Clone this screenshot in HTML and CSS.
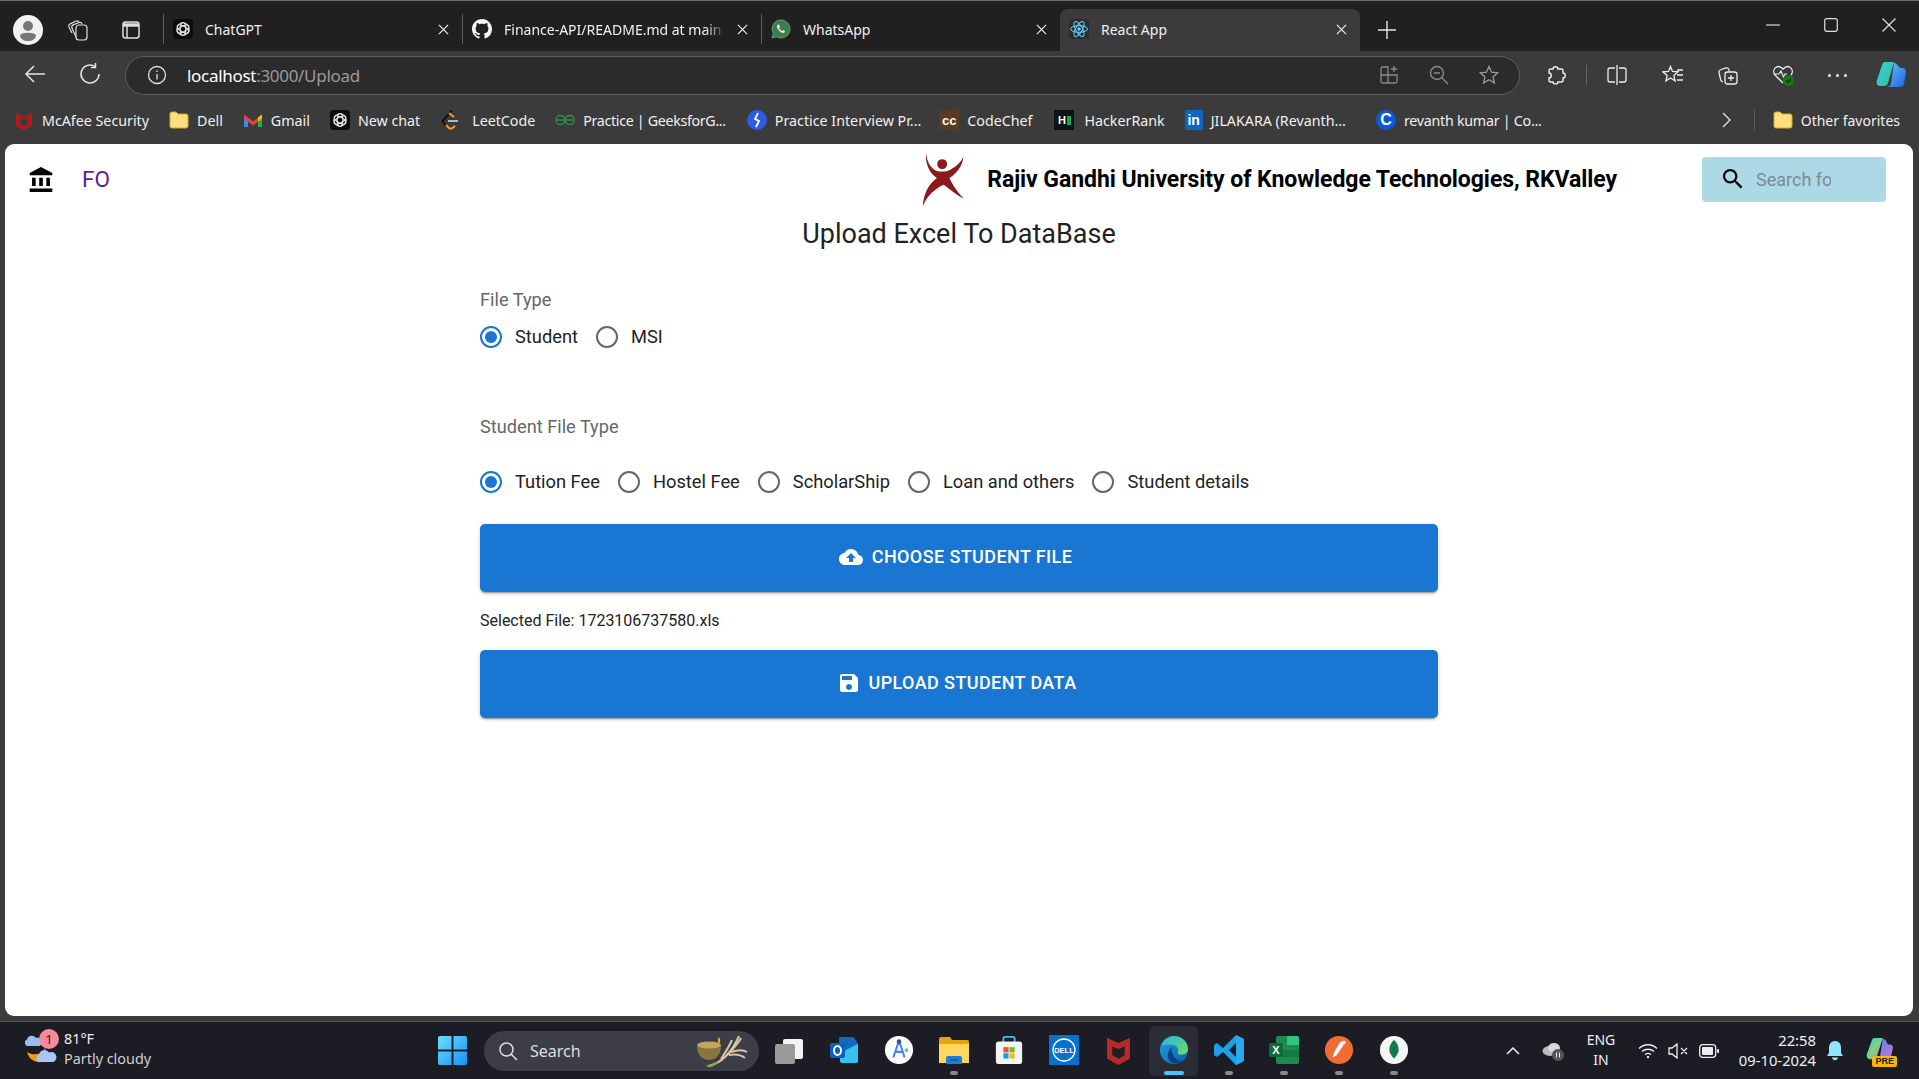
FILE: index.html
```html
<!DOCTYPE html>
<html lang="en">
<head>
    <meta charset="UTF-8">
    <title>React App</title>
    <link rel="stylesheet" href="styles.css">
</head>
<body>
    <svg class="defs" width="0" height="0">
        <symbol id="i-close" viewBox="0 0 12 12"><path d="M1 1l10 10M11 1L1 11" stroke="currentColor" stroke-width="1.3" fill="none"/></symbol>
        <symbol id="i-openai" viewBox="0 0 20 20"><rect width="20" height="20" rx="4" fill="#0c0c0c"/><g fill="none" stroke="#e6e6e6" stroke-width="1.1"><circle cx="10" cy="10" r="6.2"/><ellipse cx="10" cy="10" rx="6.5" ry="2.8" transform="rotate(30 10 10)"/><ellipse cx="10" cy="10" rx="6.5" ry="2.8" transform="rotate(90 10 10)"/><ellipse cx="10" cy="10" rx="6.5" ry="2.8" transform="rotate(150 10 10)"/></g></symbol>
        <symbol id="i-folder" viewBox="0 0 20 18"><path d="M1 3a2 2 0 012-2h4l2 2h8a2 2 0 012 2v10a2 2 0 01-2 2H3a2 2 0 01-2-2z" fill="#ffdf80" stroke="#d9a730"/></symbol>
    </svg>

    <!-- browser: tabs -->
    <div class="tabstrip">
        <div class="strip-left">
            <span class="avatar"><svg viewBox="0 0 30 30" width="30" height="30"><circle cx="15" cy="15" r="15" fill="#f2f2f2"/><circle cx="15" cy="11" r="5" fill="#777"/><path d="M7 20c2-3 14-3 16 0 0 4-4 6-8 6s-8-2-8-6z" fill="#777"/></svg></span>
            <svg class="strip-ico" viewBox="0 0 22 22" width="22" height="22" fill="none" stroke="#ddd" stroke-width="1.2"><rect x="9" y="6" width="11" height="15" rx="3"/><path d="M9 18L5 9c-.6-1.400-.2-2.500 1.200-3.100L12 3.500c1.400-.5 2.500 0 3 1.500"/><path d="M5 14L2 8c-.6-1.400-.2-2.500 1.200-3.100L9 2c1.300-.5 2.300-.2 3 1"/></svg>
            <svg class="strip-ico" viewBox="0 0 20 20" width="20" height="20" fill="none" stroke="#ddd" stroke-width="1.5"><rect x="2" y="2" width="16" height="16" rx="2.500"/><path d="M2 5h16" stroke-width="3.500"/><path d="M6 6v12"/></svg>
        </div>
        <div class="tab">
            <svg class="fav" width="20" height="20"><use href="#i-openai"/></svg>
            <span class="tab-title">ChatGPT</span>
            <svg class="tab-x" width="11" height="11"><use href="#i-close"/></svg>
        </div>
        <div class="tab">
            <svg class="fav" viewBox="0 0 16 16" width="20" height="20"><path fill="#f5f5f5" d="M8 0C3.58 0 0 3.58 0 8c0 3.54 2.29 6.53 5.47 7.59.4.07.55-.17.55-.38 0-.19-.01-.82-.01-1.49-2.010.37-2.530-.49-2.690-.94-.09-.23-.48-.94-.82-1.130-.28-.15-.68-.52-.01-.53.63-.01 1.080.58 1.230.82.72 1.210 1.870.87 2.330.66.07-.52.28-.87.51-1.070-1.780-.2-3.640-.89-3.640-3.950 0-.87.31-1.590.82-2.150-.08-.2-.36-1.020.08-2.120 0 0 .67-.21 2.200.82.64-.18 1.320-.27 2-.27s1.360.09 2 .27c1.530-1.040 2.200-.82 2.200-.82.44 1.100.16 1.920.08 2.120.51.56.82 1.270.82 2.150 0 3.070-1.870 3.750-3.650 3.950.29.25.54.73.54 1.480 0 1.070-.01 1.930-.01 2.200 0 .21.15.46.55.38A8.013 8.013 0 0016 8c0-4.420-3.580-8-8-8z"/></svg>
            <span class="tab-title fade">Finance-API/README.md at main</span>
            <svg class="tab-x" width="11" height="11"><use href="#i-close"/></svg>
        </div>
        <div class="tab">
            <svg class="fav" viewBox="0 0 20 20" width="20" height="20"><path d="M10 1a9 9 0 00-7.700 13.600L1 19l4.500-1.200A9 9 0 1010 1z" fill="#3a7d4e" stroke="#6a9a78"/><path d="M7 5.500c-1.500 1-1.500 3 .5 5.500s4.500 3.500 6 2.500l.5-1.500-2-1-1 1c-1-.5-2.500-2-3-3l1-1-1-2.500z" fill="#e8e8e8"/></svg>
            <span class="tab-title">WhatsApp</span>
            <svg class="tab-x" width="11" height="11"><use href="#i-close"/></svg>
        </div>
        <div class="tab tab-active">
            <svg class="fav" viewBox="0 0 20 20" width="20" height="20"><rect width="20" height="20" rx="3" fill="#2a2c30"/><g fill="none" stroke="#61dafb" stroke-width="1"><ellipse cx="10" cy="10" rx="8.500" ry="3.300"/><ellipse cx="10" cy="10" rx="8.500" ry="3.300" transform="rotate(60 10 10)"/><ellipse cx="10" cy="10" rx="8.500" ry="3.300" transform="rotate(120 10 10)"/></g><circle cx="10" cy="10" r="1.700" fill="#61dafb"/></svg>
            <span class="tab-title">React App</span>
            <svg class="tab-x" width="11" height="11"><use href="#i-close"/></svg>
        </div>
        <svg class="new-tab" viewBox="0 0 18 18" width="18" height="18"><path d="M9 0v18M0 9h18" stroke="#e6e6e6" stroke-width="1.400"/></svg>
        <div class="win-ctrls">
            <svg viewBox="0 0 14 14" width="14" height="14"><path d="M0 7h14" stroke="#ddd" stroke-width="1.200"/></svg>
            <svg viewBox="0 0 14 14" width="14" height="14"><rect x=".7" y=".7" width="12.600" height="12.600" rx="2" fill="none" stroke="#ddd" stroke-width="1.200"/></svg>
            <svg viewBox="0 0 14 14" width="14" height="14"><path d="M.5.5l13 13M13.500.5l-13 13" stroke="#ddd" stroke-width="1.200"/></svg>
        </div>
    </div>

    <!-- browser: address bar -->
    <div class="toolbar">
        <svg class="nav-ico" viewBox="0 0 22 22" width="22" height="22" fill="none" stroke="#e6e6e6" stroke-width="1.500"><path d="M21 11H2M10 3l-8 8 8 8"/></svg>
        <svg class="nav-ico nav-reload" viewBox="0 0 22 22" width="22" height="22" fill="none" stroke="#e6e6e6" stroke-width="1.500"><path d="M16 3.500A9 9 0 1020 11"/><path d="M16.500 0v4.500H12"/></svg>
        <div class="addr">
            <svg viewBox="0 0 20 20" width="20" height="20" fill="none" stroke="#e0e0e0" stroke-width="1.300"><circle cx="10" cy="10" r="8.500"/><path d="M10 9v5.500M10 5.500v1.500"/></svg>
            <span class="addr-url">localhost<span class="addr-dim">:3000/Upload</span></span>
            <div class="addr-tools">
                <svg viewBox="0 0 20 20" width="20" height="20" fill="none" stroke="#8a8a8a" stroke-width="1.300"><path d="M9 2H3.500A1.500 1.500 0 002 3.500V10h7zM2 10v6.500A1.500 1.500 0 003.500 18H9v-8zM9 10h9v6.500a1.500 1.500 0 01-1.500 1.500H9zM15 1v6M12 4h6"/></svg>
                <svg viewBox="0 0 20 20" width="20" height="20" fill="none" stroke="#8a8a8a" stroke-width="1.400"><circle cx="8" cy="8" r="6.500"/><path d="M5 8h6M13 13l6 6"/></svg>
                <svg viewBox="0 0 20 20" width="20" height="20" fill="none" stroke="#9a9a9a" stroke-width="1.300"><path d="M10 1.500l2.500 5.700 6.200.6-4.700 4.100 1.400 6.100-5.400-3.200-5.400 3.200 1.400-6.100L1.300 7.800l6.200-.6z"/></svg>
            </div>
        </div>
        <div class="tool-icons">
            <svg viewBox="0 0 20 20" width="20" height="20" fill="none" stroke="#eee" stroke-width="1.400"><path d="M7 4c0-3 5-3 5 0h3.500A1.500 1.500 0 0117 5.500V8c3 0 3 5 0 5v2.500a1.500 1.500 0 01-1.500 1.500H12c0 2.500-5 2.500-5 0H4.500A1.500 1.500 0 013 15.500V13c3 0 3-5 0-5V5.500A1.500 1.500 0 014.500 4z"/></svg>
            <span class="tool-sep"></span>
            <svg viewBox="0 0 20 20" width="20" height="20" fill="none" stroke="#eee" stroke-width="1.300"><path d="M10 0v20M8 3H3a2 2 0 00-2 2v10a2 2 0 002 2h5M12 3h5a2 2 0 012 2v10a2 2 0 01-2 2h-5"/></svg>
            <svg viewBox="0 0 22 20" width="22" height="20" fill="none" stroke="#eee" stroke-width="1.300"><path d="M8.500 1.500l2 5 5.500.4-4.200 3.600 1.300 5.400-4.600-2.900-4.600 2.900 1.300-5.400L1 6.900l5.500-.4z"/><path d="M15 5h6M15 10h6M15 15h6"/></svg>
            <svg class="coll" viewBox="0 0 20 20" width="20" height="20" fill="none" stroke="#eee" stroke-width="1.300"><rect x="7" y="7" width="12" height="12" rx="2.500"/><path d="M13 10v6M10 13h6M5 17c-1-.3-2-1-2.300-2L1 7.500C.7 6 1.500 5 3 4.500L8 3c1.500-.4 2.700.4 3 2l.2 1"/></svg>
            <svg class="heart" viewBox="0 0 22 22" width="22" height="22"><path d="M11 19L3 11C-1 6 5-1 11 5c6-6 12 1 8 6" fill="none" stroke="#eee" stroke-width="1.300"/><path d="M2 10h5l2-3 2.500 6 1.500-3h2" fill="none" stroke="#eee" stroke-width="1.100"/><circle cx="16.500" cy="16.500" r="5.500" fill="#107c10"/><path d="M14 16.500l2 2 3-3.500" fill="none" stroke="#222" stroke-width="1.200"/></svg>
            <span class="dots"><i></i><i></i><i></i></span>
            <svg class="copilot" viewBox="0 0 30 30" width="30" height="30"><defs><linearGradient id="cpa" x1="0" y1="0" x2="1" y2="1"><stop offset="0" stop-color="#3dc9e8"/><stop offset="1" stop-color="#30c48c"/></linearGradient><linearGradient id="cpb" x1="0" y1="0" x2="1" y2="1"><stop offset="0" stop-color="#6cc4f5"/><stop offset="1" stop-color="#1b60e0"/></linearGradient></defs><path d="M9 2h9l-6 21c-.5 2-2 3-4 3H4C1 26 0 23 1 20L6 5c.5-2 1.500-3 3-3z" fill="url(#cpa)"/><path d="M18 3c2 0 3 1 4 3l2.500 2H27c2 0 3 2 3 4l-2 12c-.5 2-2 3-4 3H11c2 0 3-1 4-3z" fill="url(#cpb)"/></svg>
        </div>
    </div>

    <!-- browser: favorites -->
    <div class="bookmarks">
        <a class="bm bm-mcafee"><svg viewBox="0 0 18 20" width="18" height="20"><path d="M1 3l8 4 8-4v13l-8 4-8-4z" fill="#b01c1c"/><path d="M5 8l4 2 4-2v6l-4 2-4-2z" fill="#3b3b3b"/></svg>McAfee Security</a>
        <a class="bm bm-dell"><svg width="20" height="18"><use href="#i-folder"/></svg>Dell</a>
        <a class="bm bm-gmail"><svg viewBox="0 0 20 16" width="20" height="16"><path d="M1 15V3l4 3v9z" fill="#4285f4"/><path d="M19 15V3l-4 3v9z" fill="#34a853"/><path d="M1 2.500l9 7 9-7v4l-9 7-9-7z" fill="#ea4335"/><path d="M15 5.600l4-3.100v4l-4 3.100z" fill="#fbbc04"/></svg>Gmail</a>
        <a class="bm bm-chat"><svg width="20" height="20"><use href="#i-openai"/></svg>New chat</a>
        <a class="bm bm-leet"><svg viewBox="0 0 18 20" width="18" height="20" fill="none" stroke-width="2"><path d="M11 0.500L1.500 11 5 16" stroke="#111"/><path d="M5 15l3.500 3.500c2 .8 4-1 5.500-2.500" stroke="#f0a21b"/><path d="M8 3l5 4" stroke="#f0a21b"/><path d="M7 11h10" stroke="#b5b5b5"/></svg>LeetCode</a>
        <a class="bm bm-gfg"><svg viewBox="0 0 20 12" width="20" height="12" fill="none" stroke="#2f8d46" stroke-width="1.300"><path d="M10 6h9M10 6H1M1 6c0-6 8-6 9 0 1 6 9 6 9 0M1 6c0 6 8 6 9 0 1-6 9-6 9 0"/></svg>Practice | GeeksforG...</a>
        <a class="bm bm-pip"><svg viewBox="0 0 20 20" width="20" height="20"><circle cx="10" cy="10" r="10" fill="#2c5be8"/><path d="M11 3l-3 6 4 2-3 6" fill="none" stroke="#fff" stroke-width="1.800"/></svg>Practice Interview Pr...</a>
        <a class="bm bm-cc"><span class="fav-box fav-cc">cc</span>CodeChef</a>
        <a class="bm bm-hr"><span class="fav-box fav-hr">H<i></i></span>HackerRank</a>
        <a class="bm bm-in"><span class="fav-box fav-in">in</span>JILAKARA (Revanth...</a>
        <a class="bm bm-rk"><span class="fav-box fav-c">C</span>revanth kumar | Co...</a>
        <svg class="bm-more" viewBox="0 0 10 16" width="10" height="16" fill="none" stroke="#e6e6e6" stroke-width="1.300"><path d="M1 1l7 7-7 7"/></svg>
        <span class="bm-sep"></span>
        <a class="bm bm-other"><svg width="20" height="18"><use href="#i-folder"/></svg>Other favorites</a>
    </div>

    <!-- the app -->
    <div class="page">
        <header class="app-bar">
            <svg class="bank" viewBox="2 1 19 21" width="24" height="25"><path d="M4 10v7h3v-7H4zm6 0v7h3v-7h-3zM2 22h19v-3H2v3zm14-12v7h3v-7h-3zm-4.500-9L2 6v2h19V6l-9.500-5z"/></svg>
            <span class="app-name">FO</span>
            <div class="brand">
                <svg viewBox="35 20 130 165" width="43" height="55" fill="#8a1a1e"><circle cx="96" cy="56" r="15"/><path d="M47 22C50 50 62 70 78 76c12 4 30 4 44-4 18-10 33-24 38-39 0 25-20 52-42 65 10 22 27 47 44 62-22-10-44-30-62-42-25 12-50 32-62 65 0-33 17-68 42-85C58 85 44 55 47 22z"/></svg>
                <span class="brand-name">Rajiv Gandhi University of Knowledge Technologies, RKValley</span>
            </div>
            <div class="search">
                <svg viewBox="3 3 18 18" width="20" height="20"><path d="M15.500 14h-.79l-.28-.27C15.410 12.590 16 11.110 16 9.500 16 5.910 13.090 3 9.500 3S3 5.910 3 9.500 5.910 16 9.500 16c1.610 0 3.090-.59 4.230-1.570l.27.28v.79l5 4.990L20.490 19l-4.990-5zm-6 0C7.010 14 5 11.990 5 9.500S7.010 5 9.500 5 14 7.010 14 9.500 11.990 14 9.500 14z"/></svg>
                <span class="search-text">Search for</span>
            </div>
        </header>

        <main class="upload">
            <h1 class="upload-title">Upload Excel To DataBase</h1>

            <div class="field-label">File Type</div>
            <div class="radio-row">
                <label class="radio-opt"><span class="radio on"></span>Student</label>
                <label class="radio-opt"><span class="radio"></span>MSI</label>
            </div>

            <div class="field-label label-second">Student File Type</div>
            <div class="radio-row row-second">
                <label class="radio-opt"><span class="radio on"></span>Tution Fee</label>
                <label class="radio-opt"><span class="radio"></span>Hostel Fee</label>
                <label class="radio-opt"><span class="radio"></span>ScholarShip</label>
                <label class="radio-opt"><span class="radio"></span>Loan and others</label>
                <label class="radio-opt"><span class="radio"></span>Student details</label>
            </div>

            <button class="btn btn-choose">
                <svg viewBox="0 0 24 24" width="24" height="24"><path d="M19.350 10.040C18.670 6.590 15.640 4 12 4 9.110 4 6.600 5.640 5.350 8.040 2.340 8.360 0 10.910 0 14c0 3.310 2.690 6 6 6h13c2.760 0 5-2.240 5-5 0-2.640-2.050-4.780-4.650-4.960zM14 13v4h-4v-4H7l5-5 5 5h-3z"/></svg>
                Choose Student File
            </button>
            <p class="selected">Selected File: 1723106737580.xls</p>
            <button class="btn btn-upload">
                <svg viewBox="3 3 18 18" width="18" height="18"><path d="M17 3H5c-1.110 0-2 .9-2 2v14c0 1.100.89 2 2 2h14c1.100 0 2-.9 2-2V7l-4-4zm-5 16c-1.660 0-3-1.340-3-3s1.340-3 3-3 3 1.340 3 3-1.340 3-3 3zm3-10H5V5h10v4z"/></svg>
                Upload Student Data
            </button>
        </main>
    </div>

    <!-- windows taskbar -->
    <footer class="taskbar">
        <div class="weather">
            <svg viewBox="0 0 34 36" width="34" height="36"><path d="M2 19c3 11 14 12 20 8l-2-13c0 6-10 10-18 5z" fill="#f09a1e"/><path d="M2 13a3.500 3.500 0 010-6.500 5 5 0 019-1.500 4 4 0 013.500 8z" fill="#9bbcf0"/><path d="M14 29a4 4 0 010-7.500 5.500 5.500 0 0110-2 4.500 4.500 0 014.500 9.500z" fill="#a8c6f5"/></svg>
            <span class="weather-badge">1</span>
            <div class="weather-text"><span>81°F</span><span class="dim">Partly cloudy</span></div>
        </div>
        <svg class="win-logo" viewBox="0 0 30 30" width="30" height="30"><defs><linearGradient id="wl" x1="0" y1="0" x2="1" y2="1"><stop offset="0" stop-color="#6fdcff"/><stop offset="1" stop-color="#1293f5"/></linearGradient></defs><path d="M0 2a2 2 0 012-2h12v14H0zM16 0h12a2 2 0 012 2v12H16zM0 16h14v14H2a2 2 0 01-2-2zM16 16h14v12a2 2 0 01-2 2H16z" fill="url(#wl)"/></svg>
        <div class="tb-search">
            <svg viewBox="0 0 20 20" width="20" height="20" fill="none" stroke="#ddd" stroke-width="1.500"><circle cx="8.500" cy="8.500" r="6.500"/><path d="M13 13l6 6"/></svg>
            <span>Search</span>
            <svg class="diya" viewBox="0 0 56 32" width="56" height="32"><path d="M2 10c6 4 18 4 24 0 0 10-5 15-12 15S2 20 2 10z" fill="#8a7440"/><ellipse cx="14" cy="10" rx="12" ry="3.500" fill="#c0a660"/><path d="M24 2c2 3 1 6 0 7-1-1-2-4 0-7z" fill="#f5a623"/><g fill="none" stroke="#d8c6a4" stroke-width="2"><path d="M14 31c12-3 22-12 30-30"/><path d="M26 24c4-6 8-12 11-19"/><path d="M32 20c5-5 11-11 14-17"/><path d="M34 20c6-1 12 0 16 3"/><path d="M36 17c6-2 11-3 16 0"/></g><path d="M12 31c4 0 8-2 11-4" stroke="#8aa83c" stroke-width="2" fill="none"/></svg>
        </div>
        <div class="tb-apps">
            <span class="app"><svg viewBox="0 0 30 30" width="30" height="30"><rect x="9" y="4" width="20" height="20" rx="2" fill="#f4f4f4"/><rect x="1" y="9" width="20" height="20" rx="2" fill="#9a9a9a"/></svg></span>
            <span class="app"><svg viewBox="0 0 30 30" width="30" height="30"><path d="M10 2h14l5 7v17a2 2 0 01-2 2H13a2 2 0 01-2-2z" fill="#35c2ee"/><path d="M10 2h14l5 7-16 8-3-2z" fill="#0f6cbd"/><rect x="1" y="8" width="15" height="15" rx="2" fill="#0a5fc4"/><ellipse cx="8.500" cy="15.500" rx="3.500" ry="4.500" fill="none" stroke="#fff" stroke-width="2"/></svg></span>
            <span class="app"><svg viewBox="0 0 30 32" width="30" height="30"><circle cx="15" cy="16" r="15" fill="#fff"/><path d="M15 6l-6 18M15 6l6 18M10.500 18h9" fill="none" stroke="#4285f4" stroke-width="2.200"/><circle cx="15" cy="7" r="2.500" fill="#3c4d8f"/><circle cx="23" cy="16" r="2" fill="#3ddc84"/></svg></span>
            <span class="app dot"><svg viewBox="0 0 30 30" width="30" height="30"><path d="M0 4a2 2 0 012-2h9l2 3h15a2 2 0 012 2v21H0z" fill="#e5a50a"/><path d="M0 9h30v19H0z" fill="#ffd75e"/><path d="M7 29v-6a2 2 0 012-2h12a2 2 0 012 2v6z" fill="#1f7fd4"/><path d="M11 25h8" stroke="#0d4f96" stroke-width="1.200"/></svg></span>
            <span class="app"><svg viewBox="0 0 30 32" width="30" height="30"><path d="M9 8V4a2 2 0 012-2h8a2 2 0 012 2v4" fill="none" stroke="#3ec1e6" stroke-width="2"/><rect x="1" y="7" width="28" height="24" rx="3" fill="#f4f4f4"/><rect x="9" y="13" width="5.500" height="5.500" fill="#f25022"/><rect x="15.500" y="13" width="5.500" height="5.500" fill="#7fba00"/><rect x="9" y="19.500" width="5.500" height="5.500" fill="#00a4ef"/><rect x="15.500" y="19.500" width="5.500" height="5.500" fill="#ffb900"/></svg></span>
            <span class="app"><svg viewBox="0 0 30 30" width="30" height="30"><rect width="30" height="30" fill="#0672cb"/><circle cx="15" cy="15" r="11" fill="none" stroke="#fff" stroke-width="1.300"/><text x="15" y="18" class="dell-text" text-anchor="middle">DELL</text></svg></span>
            <span class="app"><svg viewBox="0 0 28 34" width="25" height="30"><path d="M1 3l13 6 13-6v24l-13 7-13-7z" fill="#b72a28"/><path d="M7 13l7 3 7-3v10l-7 4-7-4z" fill="#1c1f26"/></svg></span>
            <span class="app active"><svg viewBox="0 0 30 32" width="30" height="30"><defs><linearGradient id="edg" x1="0" y1="0" x2="1" y2="1"><stop offset="0" stop-color="#1aa4e8"/><stop offset="1" stop-color="#0b5aa8"/></linearGradient><linearGradient id="edh" x1="0" y1="0" x2="1" y2="1"><stop offset="0" stop-color="#31b5e0"/><stop offset="1" stop-color="#6fdc5a"/></linearGradient></defs><circle cx="15" cy="16" r="15" fill="url(#edg)"/><path d="M2 11C5 3 12 1 15 1c8 0 15 6 15 14 0 5-4 6-7 6-3 0-4-1-4-3 2-3-1-8-7-8-5 0-9 1-10 1z" fill="url(#edh)"/><path d="M13 17c0 5 4 10 10 11-5 3-10 3-13-1-3-4-1-12 3-14z" fill="#0a3f80"/></svg></span>
            <span class="app dot"><svg viewBox="0 0 30 30" width="30" height="30"><path d="M22 0l8 4v22l-8 4L9 17l-6 5-3-2V10l3-2 6 5zM22 8l-7 7 7 7z" fill="#1d9fe8"/><path d="M22 0l8 4v22l-8 4z" fill="#2aa9ee"/></svg></span>
            <span class="app dot"><svg viewBox="0 0 30 30" width="30" height="30"><rect x="7" y="1" width="23" height="28" rx="2" fill="#1e8b50"/><path d="M18 1h10a2 2 0 012 2v7H18z" fill="#33c481"/><path d="M7 15h23v7H7z" fill="#107c41"/><rect y="8" width="14" height="14" rx="1.500" fill="#0f6b38"/><text x="7" y="19" class="xl-text" text-anchor="middle">X</text></svg></span>
            <span class="app dot"><svg viewBox="0 0 30 32" width="30" height="30"><circle cx="15" cy="16" r="15" fill="#ef6c35"/><path d="M8 24l4-2 7-10 1-3-2-2-2 1-6 10z" fill="#fff"/><circle cx="20" cy="8" r="2" fill="#fff"/></svg></span>
            <span class="app dot"><svg viewBox="0 0 30 32" width="30" height="30"><circle cx="15" cy="16" r="15" fill="#f5f5f5"/><path d="M15 5c4 4 5 8 5 11s-3 7-5 9c-2-2-5-6-5-9s1-7 5-11z" fill="#0f7a4e"/></svg></span>
        </div>
        <div class="tray">
            <svg class="tray-up" viewBox="0 0 14 8" width="14" height="8" fill="none" stroke="#eee" stroke-width="1.500"><path d="M1 7l6-6 6 6"/></svg>
            <svg class="tray-cloud" viewBox="0 0 22 22" width="22" height="22"><ellipse cx="8" cy="11" rx="7.500" ry="5" fill="#bbb"/><ellipse cx="12" cy="8" rx="6" ry="5" fill="#d8d8d8"/><circle cx="16" cy="15" r="6" fill="#555"/><path d="M14.500 12.500v5M17.500 12.500v5" stroke="#eee"/></svg>
            <div class="tray-lang"><span>ENG</span><span>IN</span></div>
            <svg class="tray-wifi" viewBox="0 0 20 16" width="20" height="16" fill="none" stroke="#eee" stroke-width="1.400"><path d="M1 5.500c5-5 13-5 18 0M4 8.500c3.500-3 8.500-3 12 0M7 11.500c2-1.500 4-1.500 6 0"/><circle cx="10" cy="14" r="1.200" fill="#eee" stroke="none"/></svg>
            <svg class="tray-vol" viewBox="0 0 20 16" width="20" height="16" fill="none" stroke="#eee" stroke-width="1.300"><path d="M1 5v6h3l5 4V1L4 5zM13 5l6 6M19 5l-6 6"/></svg>
            <svg class="tray-bat" viewBox="0 0 20 14" width="20" height="14"><rect x=".7" y=".7" width="16" height="12.600" rx="3" fill="none" stroke="#eee" stroke-width="1.300"/><rect x="3" y="3" width="11" height="8" rx="1" fill="#eee"/><rect x="18" y="5" width="2" height="4" rx="1" fill="#eee"/></svg>
            <div class="tray-clock"><span>22:58</span><span>09-10-2024</span></div>
            <svg class="tray-bell" viewBox="0 0 16 20" width="16" height="20"><path d="M8 0c4 0 6 3 6 7v5l2 3H0l2-3V7c0-4 2-7 6-7z" fill="#8fe6ff"/><path d="M5 16.500h6c-.5 3.500-5.500 3.500-6 0z" fill="#8fe6ff"/></svg>
            <div class="tray-copilot">
                <svg viewBox="0 0 30 26" width="30" height="24"><defs><linearGradient id="cpp" x1="0" y1="0" x2="1" y2="1"><stop offset="0" stop-color="#3cc8e8"/><stop offset=".5" stop-color="#7ed37f"/><stop offset="1" stop-color="#d46ce0"/></linearGradient><linearGradient id="cpq" x1="0" y1="0" x2="1" y2="1"><stop offset="0" stop-color="#4a8cf0"/><stop offset="1" stop-color="#d46ce0"/></linearGradient></defs><path d="M9 1h9l-6 19c-.5 2-2 4-5 4H4c-3 0-4-3-3-6L6 4c.5-2 1.500-3 3-3z" fill="url(#cpp)"/><path d="M18 2c2 0 3 1 4 3l1.500 3H26c2 0 3.500 2 3 4l-2 9c-.5 2-2 4-4 4H11c2 0 3-2 4-4z" fill="url(#cpq)"/></svg>
                <span class="pre">PRE</span>
            </div>
        </div>
    </footer>
</body>
</html>
```

FILE: styles.css
```css
* {
    box-sizing: border-box;
}
html, body {
    height: 100%;
}
body {
    margin: 0;
    overflow: hidden;
    display: flex;
    flex-direction: column;
    background-color: #3b3b3b;
    font-family: 'Roboto', sans-serif;
    color: #000;
}
svg {
    flex: none;
    display: block;
}
.defs {
    position: absolute;
}

/* tab strip */
.tabstrip {
    height: 51px;
    flex: none;
    display: flex;
    align-items: flex-end;
    background-color: #202020;
    border-top: 1px solid #6e6e6e;
    font-family: 'Noto Sans', sans-serif;
    font-size: 14px;
    color: #f0f0f0;
}
.strip-left {
    width: 163px;
    height: 50px;
    display: flex;
    align-items: center;
    padding: 8px 0 0 13px;
}
.strip-left .strip-ico:nth-child(2) {
    margin-left: 24px;
}
.strip-left .strip-ico:nth-child(3) {
    margin-left: 32px;
}
.tab {
    width: 299px;
    height: 30px;
    margin-bottom: 7px;
    display: flex;
    align-items: center;
    padding: 0 13px 0 9px;
    border-left: 1px solid #5c5c5c;
}
.tab-title {
    margin-left: 12px;
    flex: 1;
    white-space: nowrap;
    overflow: hidden;
}
.fade {
    max-width: 224px;
    margin-right: 10px;
    -webkit-mask-image: linear-gradient(to right, #000 90%, transparent);
    mask-image: linear-gradient(to right, #000 90%, transparent);
}
.tab-x {
    color: #eee;
}
.tab-active {
    width: 300px;
    height: 42px;
    margin-bottom: 0;
    padding-bottom: 2px;
    border-left: 0;
    border-radius: 8px 8px 0 0;
    background-color: #3b3b3b;
}
.new-tab {
    margin: 0 0 12px 18px;
}
.win-ctrls {
    margin-left: auto;
    height: 50px;
    padding: 0 23px 0 0;
    display: flex;
    align-items: flex-start;
    gap: 44px;
}
.win-ctrls svg {
    margin-top: 17px;
}

/* address bar */
.toolbar {
    height: 45px;
    flex: none;
    display: flex;
    align-items: center;
    padding-left: 24px;
}
.nav-reload {
    margin-left: 33px;
}
.addr {
    width: 1395px;
    height: 39px;
    margin: 3px 0 0 24px;
    padding: 0 20px 0 21px;
    display: flex;
    align-items: center;
    background-color: #2b2b2b;
    border: 1px solid #5e5e5e;
    border-radius: 20px;
}
.addr-url {
    margin-left: 20px;
    font-family: 'Noto Sans', sans-serif;
    font-size: 17px;
    letter-spacing: -0.3px;
    color: #fff;
}
.addr-dim {
    color: #9a9a9a;
}
.addr-tools {
    margin-left: auto;
    display: flex;
    gap: 30px;
}
.tool-icons {
    display: flex;
    align-items: center;
    margin: 3px 0 0 26px;
}
.tool-sep {
    width: 1px;
    height: 20px;
    margin: 0 20px;
    background-color: #666;
}
.tool-icons svg + svg {
    margin-left: 35px;
}
.tool-icons .coll {
    margin-left: 34px;
}
.tool-icons .heart {
    margin-left: 34px;
}
.tool-icons .copilot {
    margin-left: 29px;
}
.dots {
    display: flex;
    gap: 5px;
    margin: 0 0 0 34px;
}
.dots i {
    width: 3px;
    height: 3px;
    border-radius: 50%;
    background-color: #eee;
}

/* favorites */
.bookmarks {
    height: 48px;
    flex: none;
    display: flex;
    align-items: center;
    padding-left: 15px;
    font-family: 'Noto Sans', sans-serif;
    font-size: 14.25px;
    color: #f0f0f0;
}
.bm {
    display: flex;
    align-items: center;
    gap: 8px;
    white-space: nowrap;
}
.bm-mcafee { gap: 9px; }
.bm-dell { margin-left: 20px; }
.bm-gmail { margin-left: 20px; }
.bm-chat { margin-left: 20px; }
.bm-leet { margin-left: 21px; gap: 13px; }
.bm-gfg { margin-left: 20px; letter-spacing: -0.33px; }
.bm-pip { margin-left: 21px; }
.bm-cc { margin-left: 18px; }
.bm-hr { margin-left: 22px; gap: 10px; }
.bm-in { margin-left: 20px; }
.bm-rk { margin-left: 30px; letter-spacing: -0.25px; }
.bm-more { margin-left: auto; }
.bm-sep {
    width: 1px;
    height: 20px;
    margin: 0 18px 0 22px;
    background-color: #5c5c5c;
}
.bm-other {
    margin-right: 19px;
    font-size: 14px;
}
.fav-box {
    width: 20px;
    height: 20px;
    display: flex;
    align-items: center;
    justify-content: center;
    font-family: 'Liberation Sans', sans-serif;
    font-weight: bold;
    line-height: 1;
}
.fav-cc {
    background-color: #5b3a21;
    color: #fff;
    font-size: 13px;
}
.fav-hr {
    background-color: #0e141e;
    color: #fff;
    font-size: 11px;
}
.fav-hr i {
    width: 4px;
    height: 9px;
    margin-left: 1px;
    background-color: #1ba94c;
}
.fav-in {
    width: 18px;
    background-color: #0a66c2;
    color: #fff;
    font-size: 14px;
}
.fav-c {
    border-radius: 50%;
    background-color: #0d57d8;
    color: #fff;
    font-size: 16px;
}

/* app */
.page {
    height: 872px;
    flex: none;
    margin: 0 6px 0 5px;
    background-color: #fff;
    border-radius: 9px;
}
.app-bar {
    height: 70px;
    display: flex;
    align-items: center;
    padding: 0 27px 0 24px;
}
.bank {
    fill: #000;
}
.app-name {
    margin-left: 29px;
    font-size: 22.5px;
    color: #5a1f96;
}
.brand {
    margin-left: auto;
    display: flex;
    align-items: center;
    gap: 22px;
}
.brand-name {
    font-size: 23px;
    font-weight: 700;
    letter-spacing: -0.06px;
}
.search {
    width: 184px;
    height: 45px;
    margin-left: 85px;
    padding-left: 21px;
    display: flex;
    align-items: center;
    gap: 13px;
    background-color: #add8e6;
    border-radius: 4px;
}
.search-text {
    width: 75px;
    overflow: hidden;
    white-space: nowrap;
    font-size: 18px;
    color: #7a8c93;
}
.upload {
    width: 958px;
    margin: 0 auto;
}
.upload-title {
    margin: 0;
    font-size: 27px;
    font-weight: 400;
    line-height: 40px;
    text-align: center;
    color: #222;
}
.field-label {
    margin-top: 34px;
    font-size: 18.2px;
    line-height: 24px;
    color: #666;
}
.label-second {
    margin-top: 64px;
}
.radio-row {
    margin-top: 9px;
    height: 30px;
    display: flex;
    align-items: center;
    gap: 18px;
}
.row-second {
    margin-top: 27px;
}
.radio-opt {
    display: flex;
    align-items: center;
    gap: 13px;
    font-size: 18.3px;
    color: #222;
}
.radio {
    width: 22px;
    height: 22px;
    margin-top: 2px;
    display: flex;
    align-items: center;
    justify-content: center;
    border: 2.5px solid #666;
    border-radius: 50%;
}
.radio.on {
    border-color: #1976d2;
}
.radio.on::after {
    content: "";
    width: 12px;
    height: 12px;
    border-radius: 50%;
    background-color: #1976d2;
}
.btn {
    width: 100%;
    height: 68px;
    margin: 28px 0 0;
    padding: 0 0 3px;
    display: flex;
    align-items: center;
    justify-content: center;
    gap: 9px;
    border: none;
    border-radius: 5px;
    background-color: #1976d2;
    color: #fff;
    font-family: 'Roboto', sans-serif;
    font-size: 18px;
    font-weight: 500;
    letter-spacing: 0.4px;
    text-transform: uppercase;
    box-shadow: 0 3px 1px -2px rgba(0, 0, 0, 0.2), 0 2px 2px 0 rgba(0, 0, 0, 0.14), 0 1px 5px 0 rgba(0, 0, 0, 0.12);
}
.btn svg {
    fill: #fff;
}
.btn-choose {
    padding-right: 7px;
}
.btn-upload {
    padding-right: 2px;
    gap: 11px;
}
.selected {
    margin: 17px 0 0;
    font-size: 16px;
    line-height: 24px;
    color: #222;
}
.selected + .btn {
    margin-top: 17px;
}

/* taskbar */
.taskbar {
    position: relative;
    height: 58px;
    margin-top: auto;
    flex: none;
    display: flex;
    align-items: center;
    background-color: #1b1c24;
    border-top: 1px solid #555;
    font-family: 'Noto Sans', sans-serif;
    font-size: 14px;
    color: #f0f0f0;
}
.weather {
    position: relative;
    width: 438px;
    padding-left: 25px;
    display: flex;
    align-items: center;
    gap: 5px;
}
.weather-badge {
    position: absolute;
    left: 39px;
    top: -3px;
    width: 20px;
    height: 20px;
    border-radius: 50%;
    background-color: #f78a9a;
    color: #222;
    font-size: 13px;
    line-height: 20px;
    text-align: center;
}
.weather-text {
    display: flex;
    flex-direction: column;
    margin-top: -3px;
    font-size: 14.4px;
    line-height: 20px;
}
.dim {
    color: #cfcfcf;
}
.win-logo {
    width: 29px;
    height: 29px;
}
.tb-search {
    width: 275px;
    height: 40px;
    margin-left: 17px;
    padding: 0 8px 0 14px;
    display: flex;
    align-items: center;
    gap: 12px;
    background-color: #3c3d46;
    border-radius: 20px;
    font-size: 16px;
    color: #ddd;
}
.diya {
    margin-left: auto;
}
.tb-apps {
    display: flex;
    margin-left: 2px;
}
.app {
    position: relative;
    width: 55px;
    height: 50px;
    display: flex;
    align-items: center;
    justify-content: center;
}
.app svg {
    margin-top: -1px;
}
.app.active {
    width: 49px;
    margin: 0 3px;
    background-color: #2a2c36;
    border-radius: 6px;
}
.app.dot::after,
.app.active::after {
    content: "";
    position: absolute;
    left: 50%;
    bottom: 1px;
    width: 8px;
    height: 4px;
    margin-left: -4px;
    border-radius: 2px;
    background-color: #8a8a8a;
}
.app.active::after {
    width: 20px;
    margin-left: -10px;
    background-color: #4cc2ff;
}
.dell-text {
    font-family: 'Liberation Sans', sans-serif;
    font-size: 7.5px;
    font-weight: bold;
    fill: #fff;
}
.xl-text {
    font-family: 'Liberation Sans', sans-serif;
    font-size: 11px;
    font-weight: bold;
    fill: #fff;
}
.tray {
    margin-left: auto;
    padding-right: 24px;
    display: flex;
    align-items: center;
    width: 414px;
}
.tray-up { margin-left: 1px; }
.tray-cloud { margin-left: 22px; }
.tray-lang {
    width: 50px;
    margin-left: 12px;
    display: flex;
    flex-direction: column;
    align-items: center;
    margin-top: -2px;
    line-height: 20px;
}
.tray-wifi { margin-left: 12px; }
.tray-vol { margin-left: 10px; }
.tray-bat { margin-left: 11px; }
.tray-clock {
    margin-left: auto;
    margin-top: -2px;
    display: flex;
    flex-direction: column;
    align-items: flex-end;
    font-size: 14.8px;
    line-height: 20px;
}
.tray-bell { margin-left: 11px; }
.tray-copilot {
    position: relative;
    margin-left: 22px;
    margin-top: -4px;
}
.pre {
    position: absolute;
    right: -2px;
    bottom: -6px;
    padding: 0 3px;
    border-radius: 2px;
    background-color: #f6b800;
    color: #222;
    font-family: 'Liberation Sans', sans-serif;
    font-size: 9px;
    font-weight: bold;
    line-height: 11px;
}
```
